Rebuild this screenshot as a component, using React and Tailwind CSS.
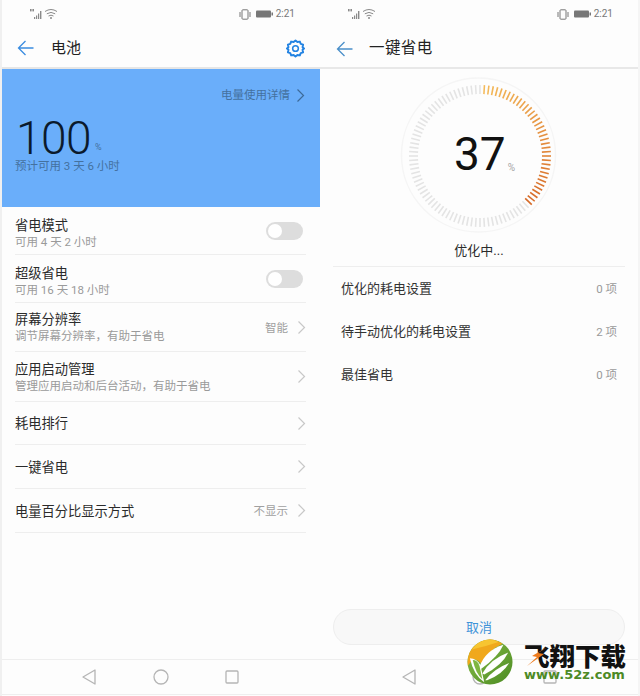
import React from 'react';

const FONT = 'font-["Roboto","Noto_Sans_CJK_SC",sans-serif]';

const Chevron = ({ className = 'text-[#c8c8c8]' }) => (
  <svg width="9" height="15" viewBox="0 0 9 15" fill="none" className={className}>
    <path d="M1.5 1.5 L7.5 7.5 L1.5 13.5" stroke="currentColor" strokeWidth="1.2" />
  </svg>
);

const BackArrow = ({ color }) => (
  <svg width="17" height="16" viewBox="0 0 17 16" fill="none" stroke={color} strokeWidth="1.3">
    <path d="M16.5 8 H1.5 M8.5 1 L1.5 8 L8.5 15" />
  </svg>
);

const Gear = () => (
  <svg width="19" height="19" viewBox="0 0 20 20" fill="none" stroke="#2383e2">
    <path
      strokeWidth="2"
      strokeLinejoin="round"
      d="M10 1.5 L12 3.2 L14.6 2.7 L15.5 5.1 L18 6 L17.4 8.6 L19 10 L17.4 11.4 L18 14 L15.5 14.9 L14.6 17.3 L12 16.8 L10 18.5 L8 16.8 L5.4 17.3 L4.5 14.9 L2 14 L2.6 11.4 L1 10 L2.6 8.6 L2 6 L4.5 5.1 L5.4 2.7 L8 3.2 Z"
    />
    <circle cx="10" cy="10" r="3" strokeWidth="1.6" />
  </svg>
);

function StatusBar({ shift = 0 }) {
  return (
    <div className="h-[27px] flex items-center justify-between pt-[1px]">
      <div className="flex items-center" style={{ marginLeft: 27 - shift }}>
        <svg width="30" height="12" viewBox="0 0 30 12" fill="#8a8a8a">
          <rect x="1" y="1" width="1.6" height="2.4" />
          <rect x="3.4" y="1" width="1.6" height="2.4" />
          <rect x="5" y="9" width="1.2" height="2" />
          <rect x="7" y="7.5" width="1.2" height="3.5" />
          <rect x="9" y="5.5" width="1.2" height="5.5" />
          <rect x="11" y="3" width="1.4" height="8" />
          <g fill="none" stroke="#8a8a8a" strokeWidth="1">
            <path d="M16 3.5 Q22 -0.5 28 3.5" />
            <path d="M17.8 5.8 Q22 3 26.2 5.8" />
            <path d="M19.5 8 Q22 6.4 24.5 8" />
          </g>
          <circle cx="22" cy="10" r="1" fill="#8a8a8a" />
        </svg>
      </div>
      <div className="flex items-center gap-[3px]" style={{ marginRight: 25 + shift }}>
        <svg width="12" height="11" viewBox="0 0 12 11" fill="none" stroke="#777">
          <rect x="3" y="0.8" width="6" height="9.4" rx="0.8" strokeWidth="1" />
          <path d="M1 3 V8 M11 3 V8" strokeWidth="1" />
        </svg>
        <svg width="17" height="8" viewBox="0 0 17 8" className="ml-[2px]">
          <rect x="0" y="0.5" width="15" height="7" rx="1" fill="#777777" />
          <rect x="15.5" y="2.5" width="1.5" height="3" fill="#777777" />
        </svg>
        <span className="text-[10px] leading-none text-[#777777]">2:21</span>
      </div>
    </div>
  );
}

function NavBar({ left }) {
  return (
    <div className={`h-[36px] mb-[1px] border-t border-b border-[#eeeeee] flex items-center justify-between ${left ? 'pl-[80px] pr-[81px]' : 'pl-[82px] pr-[81px]'}`}>
      <svg width="14" height="16" viewBox="0 0 14 16" fill="none" stroke="#b5b5b5" strokeWidth="1.3" strokeLinejoin="round">
        <path d="M13 1 V15 L1 8 Z" />
      </svg>
      <svg width="16" height="16" viewBox="0 0 16 16" fill="none" stroke="#b5b5b5" strokeWidth="1.3">
        <circle cx="8" cy="8" r="7" />
      </svg>
      <svg width="14" height="14" viewBox="0 0 14 14" fill="none" stroke="#b5b5b5" strokeWidth="1.3">
        <rect x="1" y="1" width="12" height="12" rx="1" />
      </svg>
    </div>
  );
}

const rows = [
  { title: '省电模式', sub: '可用 4 天 2 小时', toggle: true, h: 'h-[48px]', pt: 'pt-[6px]' },
  { title: '超级省电', sub: '可用 16 天 18 小时', toggle: true, h: 'h-[48px]', pt: 'pt-[6px]' },
  { title: '屏幕分辨率', sub: '调节屏幕分辨率，有助于省电', value: '智能', h: 'h-[49px]', pt: 'pt-[1px]' },
  { title: '应用启动管理', sub: '管理应用启动和后台活动，有助于省电', h: 'h-[50px]', pt: 'pt-[2px]' },
  { title: '耗电排行', h: 'h-[43px]', pt: 'pt-[1px]' },
  { title: '一键省电', h: 'h-[44px]', pt: 'pt-[1px]' },
  { title: '电量百分比显示方式', value: '不显示', h: 'h-[44px]', pt: 'pt-[1px]' },
];

function Row({ row }) {
  return (
    <div className={`${row.h} border-b border-[#eeeeee] flex items-center justify-between`}>
      <div className={row.pt}>
        <div className="text-[13.25px] leading-[17px] text-[#2b2b2b]">{row.title}</div>
        {row.sub && <div className="text-[11.5px] leading-[16px] text-[#9a9a9a]">{row.sub}</div>}
      </div>
      {row.toggle ? (
        <div className="w-[37px] h-[18px] rounded-full bg-[#dddddd] p-[2px] mr-[3px]">
          <div className="w-[14px] h-[14px] rounded-full bg-white" />
        </div>
      ) : (
        <div className="flex items-center gap-[9px]">
          {row.value && <span className="text-[11.5px] mt-[3px] text-[#a0a0a0]">{row.value}</span>}
          <Chevron />
        </div>
      )}
    </div>
  );
}

function BatteryPanel() {
  return (
    <div className="w-[320px] h-full flex flex-col bg-[#fdfdfd] border-l-2 border-[#f0f0f0]">
      <StatusBar shift={0} />
      <div className="h-[42px] flex items-center pl-[15px] pr-[15px] pt-[2px] border-b-2 border-[#e6e6e6]">
        <BackArrow color="#3a8ce0" />
        <span className="ml-[17px] text-[15px] text-[#222222]">电池</span>
        <div className="ml-auto"><Gear /></div>
      </div>
      <div className="h-[138px] bg-[#6aaefa] flex flex-col">
        <div className="flex items-center justify-end gap-[6px] pt-[18px] pr-[15px]">
          <span className="text-[11.5px] leading-[16px] text-[#44719f]">电量使用详情</span>
          <Chevron className="text-[#3d6a99]" />
        </div>
        <div className="flex items-end pl-[14px] mt-[15px]">
          <span className="text-[46px] leading-[40px] font-light text-[#0b1a2c] tracking-[-0.5px]">100</span>
          <span className="text-[9px] leading-[11px] text-[#44719f] ml-[4px] mb-[5px]">%</span>
        </div>
        <div className="pl-[13px] text-[11.5px] leading-[16px] text-[#44719f]">预计可用 3 天 6 小时</div>
      </div>
      <div className="pl-[13px] pr-[14px] flex-1">
        {rows.map(row => <Row key={row.title} row={row} />)}
      </div>
      <NavBar left />
    </div>
  );
}

// 100 ticks, the first 37 are lit
function Gauge() {
  const cx = 80;
  const cy = 80;
  const ticks = [];
  for (let i = 0; i < 100; i++) {
    const a = ((i + 1) * 3.6 * Math.PI) / 180;
    const on = i < 37;
    const t = i / 36;
    const color = on
      ? `rgb(${Math.round(244 - 30 * t)},${Math.round(186 - 80 * t)},${Math.round(90 - 50 * t)})`
      : '#e4e4e4';
    ticks.push(
      <line
        key={i}
        x1={cx + 62 * Math.sin(a)}
        y1={cy - 62 * Math.cos(a)}
        x2={cx + 71 * Math.sin(a)}
        y2={cy - 71 * Math.cos(a)}
        stroke={color}
        strokeWidth="1.6"
      />
    );
  }
  return (
    <div className="relative w-[160px] h-[160px]">
      <svg width="160" height="160" viewBox="0 0 160 160" fill="none">
        <circle cx="78.5" cy="79" r="77" stroke="#f5f5f5" strokeWidth="1.5" />
        {ticks}
      </svg>
      <div className="absolute left-[54px] top-[54px] flex items-end">
        <span className="text-[46px] leading-[48px] text-[#111111]">37</span>
        <span className="text-[10px] leading-[14px] text-[#a5a5a5] ml-[2px] mb-[3px]">%</span>
      </div>
    </div>
  );
}

const items = [
  { label: '优化的耗电设置', count: '0 项' },
  { label: '待手动优化的耗电设置', count: '2 项' },
  { label: '最佳省电', count: '0 项' },
];

function SavingPanel() {
  return (
    <div className="w-[320px] h-full flex flex-col bg-[#fdfdfd] border-r-2 border-[#f5f5f5]">
      <StatusBar shift={0} />
      <div className="h-[42px] flex items-center pl-[16px] pt-[3px] border-b-2 border-[#e8e8e8]">
        <BackArrow color="#4a8fc9" />
        <span className="ml-[16px] text-[15.5px] tracking-[0.4px] text-[#222222]">一键省电</span>
      </div>
      <div className="flex justify-center pt-[7px] pl-[2px]">
        <Gauge />
      </div>
      <div className="mx-[13px] h-[31px] border-b border-[#eeeeee] text-center text-[13px] leading-[20px] pt-[5px] text-[#2b2b2b]">优化中...</div>
      <div className="px-[21px]">
        {items.map(it => (
          <div key={it.label} className="h-[43px] flex items-center justify-between">
            <span className="text-[13px] text-[#333333]">{it.label}</span>
            <span className="text-[11.5px] mt-[3px] text-[#9a9a9a]">{it.count}</span>
          </div>
        ))}
      </div>
      <button className="mt-auto mx-[13px] mb-[14px] h-[36px] rounded-full bg-[#f8f8f8] border border-[#eeeeee] pt-[1px] text-[13px] text-[#3f93d8]">取消</button>
      <NavBar />
    </div>
  );
}

function Watermark() {
  return (
    <div className="absolute left-[467px] top-[639px] flex items-center">
      <svg width="46" height="46" viewBox="0 0 48 48">
        <defs>
          <linearGradient id="leaf" x1="0" y1="0" x2="1" y2="1">
            <stop offset="0" stopColor="#8cc04a" />
            <stop offset="1" stopColor="#4a8a22" />
          </linearGradient>
        </defs>
        <circle cx="24" cy="24" r="23.5" fill="url(#leaf)" />
        <path d="M24 .5 A23.5 23.5 0 0 0 1 28 L6 21 Q12 21 15 26 Q22 12 37 5 A23.5 23.5 0 0 0 24 .5 Z" fill="#f0a81c" />
        <path d="M24 .5 A23.5 23.5 0 0 0 5 11 Q18 8 33 3 A23.5 23.5 0 0 0 24 .5 Z" fill="#f7c531" />
        <path d="M13 29 Q19 12 38 6 Q33 18 15 31 Z" fill="#ffffff" />
        <path d="M16 36 Q24 21 43 14 Q37 27 18 37 Z" fill="#ffffff" />
        <path d="M19 43 Q28 31 44 25 Q37 37 21 43 Z" fill="#ffffff" />
        <path d="M3 20 Q10 20 14 27 L18 45 Q7 38 3 20 Z" fill="#ffffff" />
        <path d="M6 22 Q11 22 13 28 L16 42 Q9 36 6 22 Z" fill="#7fb63f" />
      </svg>
      <div className="relative ml-[11px] flex flex-col w-[104px]">
        <span className="text-[25.5px] leading-[25px] font-black text-[#111111] font-['Noto_Sans_CJK_SC',sans-serif] whitespace-nowrap">飞翔下载</span>
        <span className="text-[13px] leading-[16px] font-bold text-[#4d8a25] font-['DejaVu_Sans',sans-serif] whitespace-nowrap">www.52z.com</span>
        <svg width="26" height="22" viewBox="0 0 26 22" className="absolute left-[1px] top-[3px]">
          <path d="M24 1 L13 8 L19 9 L2 21 L12 12 L7 11 Z" fill="#ee7b1c" />
        </svg>
      </div>
    </div>
  );
}

export default function App() {
  return (
    <div className={`relative w-[640px] h-[696px] flex bg-white overflow-hidden ${FONT}`}>
      <BatteryPanel />
      <SavingPanel />
      <Watermark />
    </div>
  );
}
